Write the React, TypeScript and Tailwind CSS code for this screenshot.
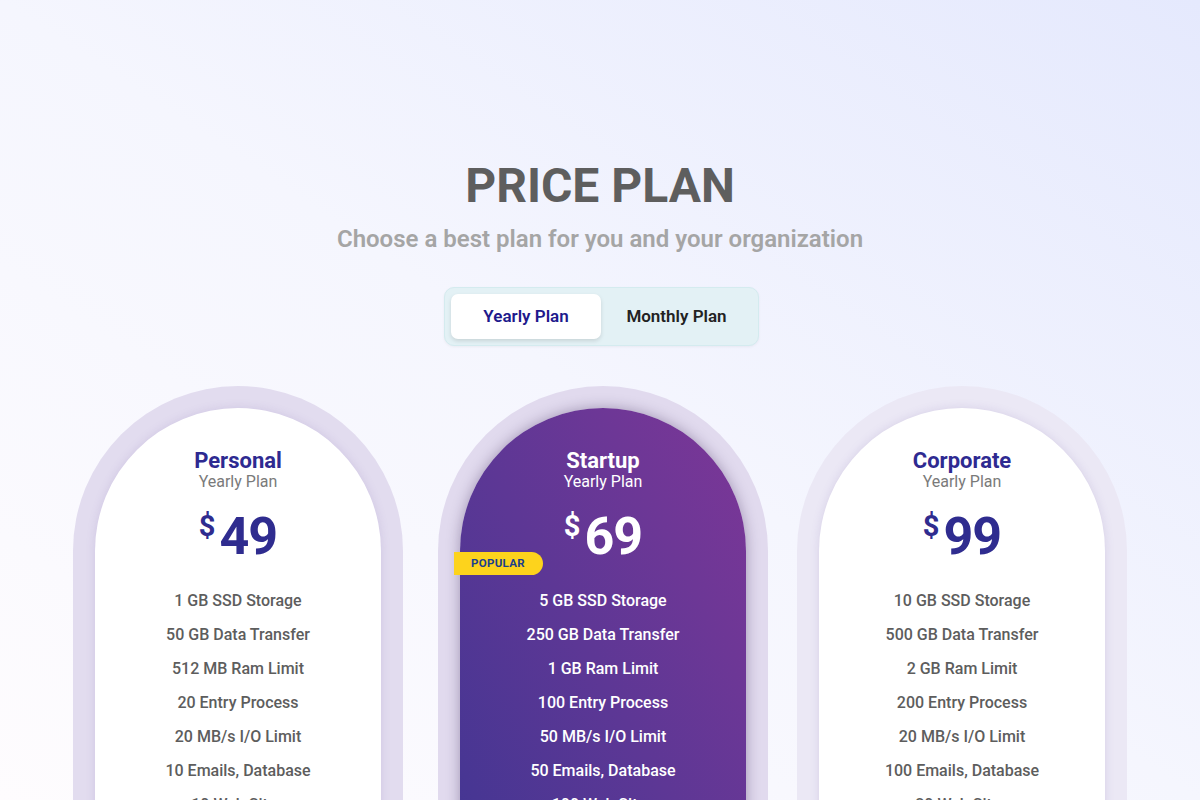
import React from "react";

type Plan = {
  name: string;
  price: string;
  features: string[];
  featured?: boolean;
  ring: string;
  gap: string;
};

const plans: Plan[] = [
  {
    name: "Personal",
    price: "49",
    ring: "bg-[#e2dcef]",
    gap: "",
    features: [
      "1 GB SSD Storage",
      "50 GB Data Transfer",
      "512 MB Ram Limit",
      "20 Entry Process",
      "20 MB/s I/O Limit",
      "10 Emails, Database",
      "10 Web Sites",
      "Free SSL Certificate",
    ],
  },
  {
    name: "Startup",
    price: "69",
    featured: true,
    ring: "bg-[#e1daee]",
    gap: "ml-[35px]",
    features: [
      "5 GB SSD Storage",
      "250 GB Data Transfer",
      "1 GB Ram Limit",
      "100 Entry Process",
      "50 MB/s I/O Limit",
      "50 Emails, Database",
      "100 Web Sites",
      "Free SSL Certificate",
    ],
  },
  {
    name: "Corporate",
    price: "99",
    ring: "bg-[#ebe8f5]",
    gap: "ml-[29px]",
    features: [
      "10 GB SSD Storage",
      "500 GB Data Transfer",
      "2 GB Ram Limit",
      "200 Entry Process",
      "20 MB/s I/O Limit",
      "100 Emails, Database",
      "20 Web Sites",
      "Free SSL Certificate",
    ],
  },
];

function PlanCard({ plan }: { plan: Plan }) {
  const dark = plan.featured;
  return (
    <div className={`relative w-[330px] h-[560px] shrink-0 rounded-t-[165px] p-[22px] pb-0 ${plan.ring} ${plan.gap}`}>
      <div
        className={
          dark
            ? "h-full rounded-t-[143px] bg-linear-to-tr from-[#3d3592] via-[#5d3795] to-[#7d3697] shadow-[0_0_14px_rgba(40,20,70,0.35)] pt-[40px] text-white"
            : "h-full rounded-t-[143px] bg-white shadow-[0_0_10px_rgba(120,100,170,0.18)] pt-[40px]"
        }
      >
        <div className="flex flex-col items-center">
          <div className={`text-[22px] font-bold leading-[26px] ${dark ? "text-white" : "text-[#2e2a91]"}`}>
            {plan.name}
          </div>
          <div className={`-mt-[2px] text-[16px] leading-[20px] ${dark ? "text-white" : "text-[#7a7a7a]"}`}>
            Yearly Plan
          </div>
          <div className={`mt-[19px] flex items-start ${dark ? "text-white" : "text-[#2f2c8f]"}`}>
            <span className="text-[29px] font-bold leading-none mt-[1px] mr-[4px]">$</span>
            <span className="text-[52px] font-bold leading-[52px] tracking-[-1px]">{plan.price}</span>
          </div>
          <ul className="mt-[27px] flex flex-col items-center gap-[12px]">
            {plan.features.map((f) => (
              <li
                key={f}
                className={`text-[16px] font-medium leading-[22px] ${dark ? "text-white" : "text-[#5d5d5d]"}`}
              >
                {f}
              </li>
            ))}
          </ul>
        </div>
      </div>
      {dark && (
        <div className="absolute left-[16px] top-[166px] flex h-[23px] w-[89px] items-center rounded-r-full bg-[#fdd31c] pl-[17px] text-[11.5px] font-bold tracking-[0.3px] text-[#1b3f8d]">
          POPULAR
        </div>
      )}
    </div>
  );
}

export default function App() {
  return (
    <div
      className="h-[800px] w-full overflow-hidden bg-linear-to-tr from-[#fefcfe] via-[#f5f6fe] to-[#e5e9fd]"
      style={{ fontFamily: "Roboto, 'Noto Sans', sans-serif" }}
    >
      <div className="flex flex-col items-center pt-[162px]">
        <h1 className="text-[48px] font-bold leading-[48px] text-[#5e5e5e]">PRICE PLAN</h1>
        <p className="mt-[14px] text-[24px] font-semibold leading-[30px] text-[#a5a5a5]">
          Choose a best plan for you and your organization
        </p>
        <div className="mt-[33px] ml-[3px] flex h-[59px] w-[315px] items-center rounded-[10px] border border-[#d4ebef] bg-[#e3f1f5] p-[6px] shadow-[0_1px_3px_rgba(0,0,0,0.05)]">
          <button className="h-[45px] w-[150px] rounded-[7px] bg-white text-[17px] font-semibold text-[#20198c] shadow-[0_2px_4px_rgba(0,0,0,0.12)]">
            Yearly Plan
          </button>
          <button className="h-[45px] flex-1 text-[17px] font-semibold text-[#222222]">Monthly Plan</button>
        </div>
        <div className="mt-[40px] flex">
          {plans.map((p) => (
            <PlanCard key={p.name} plan={p} />
          ))}
        </div>
      </div>
    </div>
  );
}
